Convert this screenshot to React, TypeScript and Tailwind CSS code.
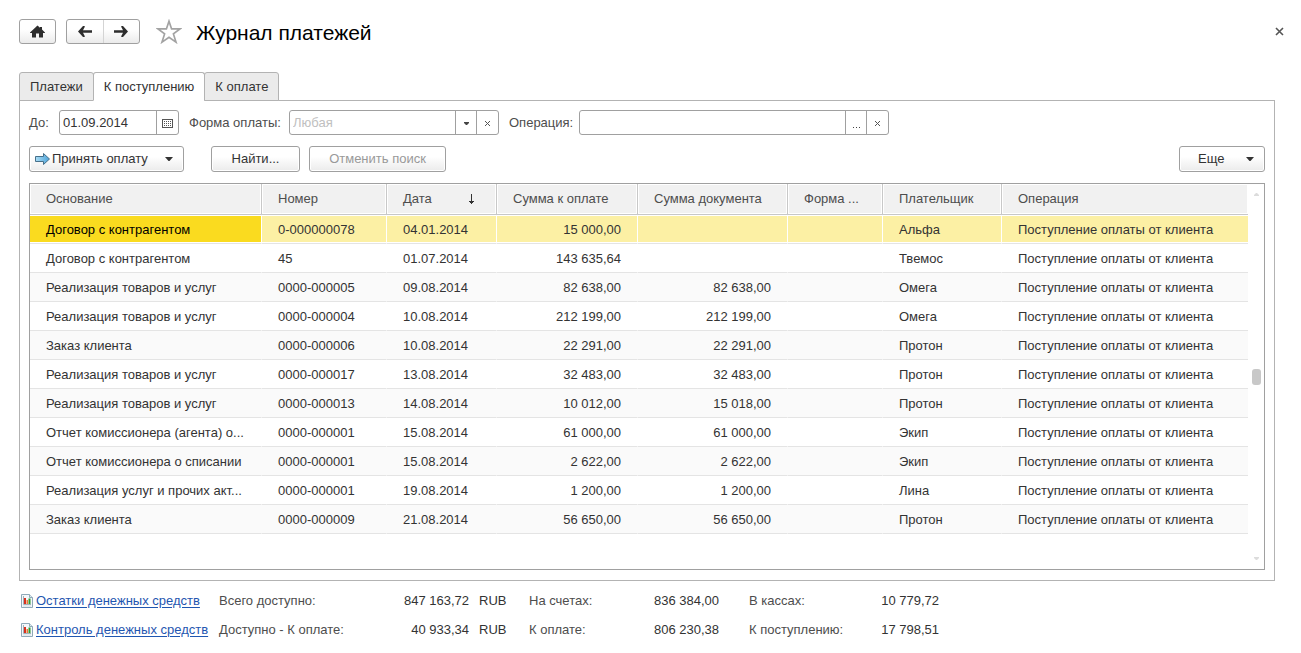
import type { ReactNode } from 'react';

type Row = {
  basis: string;
  number: string;
  date: string;
  toPay: string;
  docSum: string;
  payer: string;
};

const OPERATION = 'Поступление оплаты от клиента';

const rows: Row[] = [
  { basis: 'Договор с контрагентом', number: '0-000000078', date: '04.01.2014', toPay: '15 000,00', docSum: '', payer: 'Альфа' },
  { basis: 'Договор с контрагентом', number: '45', date: '01.07.2014', toPay: '143 635,64', docSum: '', payer: 'Твемос' },
  { basis: 'Реализация товаров и услуг', number: '0000-000005', date: '09.08.2014', toPay: '82 638,00', docSum: '82 638,00', payer: 'Омега' },
  { basis: 'Реализация товаров и услуг', number: '0000-000004', date: '10.08.2014', toPay: '212 199,00', docSum: '212 199,00', payer: 'Омега' },
  { basis: 'Заказ клиента', number: '0000-000006', date: '10.08.2014', toPay: '22 291,00', docSum: '22 291,00', payer: 'Протон' },
  { basis: 'Реализация товаров и услуг', number: '0000-000017', date: '13.08.2014', toPay: '32 483,00', docSum: '32 483,00', payer: 'Протон' },
  { basis: 'Реализация товаров и услуг', number: '0000-000013', date: '14.08.2014', toPay: '10 012,00', docSum: '15 018,00', payer: 'Протон' },
  { basis: 'Отчет комиссионера (агента) о...', number: '0000-000001', date: '15.08.2014', toPay: '61 000,00', docSum: '61 000,00', payer: 'Экип' },
  { basis: 'Отчет комиссионера о списании', number: '0000-000001', date: '15.08.2014', toPay: '2 622,00', docSum: '2 622,00', payer: 'Экип' },
  { basis: 'Реализация услуг и прочих акт...', number: '0000-000001', date: '19.08.2014', toPay: '1 200,00', docSum: '1 200,00', payer: 'Лина' },
  { basis: 'Заказ клиента', number: '0000-000009', date: '21.08.2014', toPay: '56 650,00', docSum: '56 650,00', payer: 'Протон' },
];

const totals = [
  {
    link: 'Остатки денежных средств',
    first: ['Всего доступно:', '847 163,72'],
    second: ['На счетах:', '836 384,00'],
    third: ['В кассах:', '10 779,72'],
  },
  {
    link: 'Контроль денежных средств',
    first: ['Доступно - К оплате:', '40 933,34'],
    second: ['К оплате:', '806 230,38'],
    third: ['К поступлению:', '17 798,51'],
  },
];

const buttonClass =
  'flex h-[26px] items-center rounded-[3px] border border-[#a0a0a0] bg-linear-to-b from-white from-40% to-[#ebebeb] shadow-[inset_0_0_0_1px_#fff]';

function Caret({ className }: { className?: string }) {
  return (
    <svg width="8" height="4" viewBox="0 0 8 4" className={className} aria-hidden="true">
      <path d="M0 0h8L4.500 4h-1z" fill="currentColor" />
    </svg>
  );
}

function SmallCross() {
  return (
    <svg width="5" height="5" viewBox="0 0 5 5" shapeRendering="crispEdges" aria-hidden="true">
      <path d="M0 0h1v1h-1zM4 0h1v1h-1zM1 1h1v1h-1zM3 1h1v1h-1zM2 2h1v1h-1zM1 3h1v1h-1zM3 3h1v1h-1zM0 4h1v1h-1zM4 4h1v1h-1z" fill="#555" />
    </svg>
  );
}

function ArrowIcon({ flip }: { flip?: boolean }) {
  return (
    <svg width="14" height="11" viewBox="0 0 14 11" className={flip ? 'rotate-180' : ''} aria-hidden="true">
      <path d="M0 5.500L5 0h1.700v1L5 4.200h9v2.600H5L6.700 10v1H5z" fill="#2e2e2e" />
    </svg>
  );
}

function CalendarIcon() {
  return (
    <svg width="11" height="9" viewBox="0 0 11 9" shapeRendering="crispEdges" aria-hidden="true">
      <rect x="0.5" y="0.5" width="10" height="8" fill="#fff" stroke="#555" />
      <path d="M2 2.500h7M2 4.500h7M2 6.500h7" stroke="#555" strokeDasharray="1 1" />
    </svg>
  );
}

function ReportIcon() {
  return (
    <svg width="12" height="14" viewBox="0 0 12 14" className="shrink-0" aria-hidden="true">
      <path d="M0.500 0.500h8l3 3v10h-11z" fill="#f4f8fb" stroke="#8fa9b8" />
      <path d="M8.500 0.500v3h3" fill="#dce8f0" stroke="#8fa9b8" />
      <path d="M2.500 2v8.500H10" fill="none" stroke="#a3b1ba" />
      <path d="M3 4h2v6H3z" fill="#d8301e" />
      <path d="M5.500 6h1.500v4H5.500z" fill="#e87a3a" />
      <path d="M7.500 4.500h2V10h-2z" fill="#2f9a30" />
      <path d="M2 12h8" stroke="#d3dde4" />
    </svg>
  );
}

function FieldButton({ label, children }: { label: string; children: ReactNode }) {
  return (
    <button type="button" aria-label={label} className="flex w-[21px] shrink-0 items-center justify-center border-l border-[#a0a0a0] pt-px last:w-[22px]">
      {children}
    </button>
  );
}

function HeadCell({ children }: { children: ReactNode }) {
  return (
    <th className="h-[31px] border-r border-b border-[#c8c8c8] bg-[#f1f1f1] px-4 text-left font-normal text-[#4d4d4d] shadow-[inset_0_0_0_1px_#fff] last:border-r-0">
      {children}
    </th>
  );
}

function TableRow({ row, index }: { row: Row; index: number }) {
  const selected = index === 0;
  const cell = selected
    ? 'h-[29px] border-b border-b-[#e4e4e4] border-r border-r-white px-4 pt-0.5 bg-[#fcf0a4] shadow-[inset_0_1px_0_#fff,inset_0_-1px_0_#fff] first:bg-[#fadb1f] first:text-black last:border-r-0'
    : 'h-[29px] border-b border-b-[#e4e4e4] border-r border-r-transparent px-4 pt-0.5 last:border-r-0';

  return (
    <tr className={index % 2 === 0 ? 'bg-[#fafafa]' : 'bg-white'}>
      <td className={cell}>{row.basis}</td>
      <td className={cell}>{row.number}</td>
      <td className={cell}>{row.date}</td>
      <td className={`${cell} text-right`}>{row.toPay}</td>
      <td className={`${cell} text-right`}>{row.docSum}</td>
      <td className={cell}></td>
      <td className={cell}>{row.payer}</td>
      <td className={cell}>{OPERATION}</td>
    </tr>
  );
}

export default function App() {
  return (
    <div className="bg-white pt-[19px] pb-2 pl-[19px] font-['Liberation_Sans',Arial,sans-serif] text-[13px] leading-4 text-[#333]">
      <header className="flex h-[25px] items-center pr-[17px]">
        <button type="button" aria-label="Домой" className="flex h-[25px] w-[37px] items-center justify-center rounded-[3px] border border-[#a0a0a0] bg-linear-to-b from-white from-40% to-[#ebebeb]">
          <svg width="15" height="13" viewBox="0 0 15 13" aria-hidden="true">
            <path d="M7.500 0.500l2.500 2.300V2h2v2.600l3 2.900V8h-2v4.500H9V8.500H6v4H2V8H0v-.5z" fill="#2e2e2e" />
          </svg>
        </button>
        <div className="ml-2.5 flex h-[25px] w-[74px] rounded-[3px] border border-[#a0a0a0] bg-linear-to-b from-white from-40% to-[#ebebeb]">
          <button type="button" aria-label="Назад" className="flex flex-1 items-center justify-center border-r border-[#d4d4d4]">
            <ArrowIcon />
          </button>
          <button type="button" aria-label="Вперед" className="flex flex-1 items-center justify-center">
            <ArrowIcon flip />
          </button>
        </div>
        <button type="button" aria-label="В избранное" className="ml-4">
          <svg width="26" height="25" viewBox="0 0 26 25" aria-hidden="true">
            <path d="M13 2.200l2.600 7.700h8.400l-6.600 5 2.600 8.200-7-4.900-7 4.900 2.600-8.200-6.600-5h8.400z" fill="#fff" stroke="#a3a3a3" strokeWidth="1.700" />
          </svg>
        </button>
        <h1 className="ml-3.5 pt-0.5 text-[21px] leading-6 text-black">Журнал платежей</h1>
        <button type="button" aria-label="Закрыть" className="ml-auto">
          <svg width="9" height="9" viewBox="0 0 9 9" aria-hidden="true">
            <path d="M1 1l7 7M8 1l-7 7" stroke="#555" strokeWidth="1.600" />
          </svg>
        </button>
      </header>

      <main className="mr-[26px]">
        <nav className="relative mt-7 -mb-px flex" role="tablist">
          <button type="button" role="tab" aria-selected="false" className="h-[29px] rounded-t-[3px] border border-[#b3b3b3] bg-[#ebebeb] px-2.5">
            Платежи
          </button>
          <button type="button" role="tab" aria-selected="true" className="-ml-px h-[29px] rounded-t-[3px] border border-[#b3b3b3] border-b-white bg-white px-2.5">
            К поступлению
          </button>
          <button type="button" role="tab" aria-selected="false" className="-ml-px h-[29px] rounded-t-[3px] border border-[#b3b3b3] bg-[#ebebeb] px-2.5">
            К оплате
          </button>
        </nav>

        <section className="border border-[#b3b3b3] px-[9px] pt-[9px] pb-2.5">
          <div className="flex items-center text-[#4d4d4d]">
            <label htmlFor="until" className="w-[30px]">До:</label>
            <div className="flex h-[25px] w-[120px] rounded-[3px] border border-[#a0a0a0]">
              <input id="until" defaultValue="01.09.2014" className="min-w-0 flex-1 px-[3px] text-[#333] outline-none" />
              <FieldButton label="Выбрать дату"><CalendarIcon /></FieldButton>
            </div>
            <label htmlFor="form" className="ml-2.5 w-[100px]">Форма оплаты:</label>
            <div className="flex h-[25px] w-[210px] rounded-[3px] border border-[#a0a0a0]">
              <input id="form" placeholder="Любая" className="min-w-0 flex-1 px-[3px] text-[#333] outline-none placeholder:text-[#c0c0c0]" />
              <FieldButton label="Открыть список">
                <svg width="5" height="3" viewBox="0 0 5 3" aria-hidden="true">
                  <path d="M0 0h5v1L3 3H2L0 1z" fill="#444" />
                </svg>
              </FieldButton>
              <FieldButton label="Очистить форму"><SmallCross /></FieldButton>
            </div>
            <label htmlFor="operation" className="ml-2.5 w-[70px]">Операция:</label>
            <div className="flex h-[25px] w-[310px] rounded-[3px] border border-[#a0a0a0]">
              <input id="operation" className="min-w-0 flex-1 px-[3px] text-[#333] outline-none" />
              <FieldButton label="Выбрать операцию">
                <svg width="7" height="9" viewBox="0 0 7 9" shapeRendering="crispEdges" aria-hidden="true">
                  <path d="M0 8h1v1h-1zM3 8h1v1h-1zM6 8h1v1h-1z" fill="#444" />
                </svg>
              </FieldButton>
              <FieldButton label="Очистить операцию"><SmallCross /></FieldButton>
            </div>
          </div>

          <div className="mt-[11px] flex">
            <button type="button" className={`${buttonClass} w-[155px] pl-[5px] pr-2.5`}>
              <svg width="15" height="12" viewBox="0 0 15 12" aria-hidden="true">
                <defs>
                  <linearGradient id="arrow" x1="0" x2="1">
                    <stop offset="0" stopColor="#a9dcf5" />
                    <stop offset="1" stopColor="#4da3d8" />
                  </linearGradient>
                </defs>
                <path d="M0.500 3.500h8v-3l6 5.500-6 5.500v-3h-8z" fill="url(#arrow)" stroke="#47708a" />
              </svg>
              <span className="ml-0.5">Принять оплату</span>
              <Caret className="ml-auto" />
            </button>
            <button type="button" className={`${buttonClass} ml-[27px] w-[89px] justify-center`}>Найти...</button>
            <button type="button" disabled className={`${buttonClass} ml-[9px] w-[137px] justify-center text-[#999]`}>Отменить поиск</button>
            <button type="button" className={`${buttonClass} ml-auto w-[86px] pr-2.5 pl-[18px]`}>
              <span>Еще</span>
              <Caret className="ml-auto" />
            </button>
          </div>

          <div className="mt-[11px] flex border border-[#a0a0a0]">
            <div className="min-w-0 flex-1 pb-[35px]">
              <table className="w-full table-fixed border-separate border-spacing-0 whitespace-nowrap">
                <colgroup>
                  <col className="w-[232px]" />
                  <col className="w-[125px]" />
                  <col className="w-[110px]" />
                  <col className="w-[141px]" />
                  <col className="w-[150px]" />
                  <col className="w-[95px]" />
                  <col className="w-[119px]" />
                  <col />
                </colgroup>
                <thead>
                  <tr>
                    <HeadCell>Основание</HeadCell>
                    <HeadCell>Номер</HeadCell>
                    <HeadCell>
                      <div className="flex items-center justify-between pr-1.5">
                        Дата
                        <svg width="5" height="10" viewBox="0 0 5 10" shapeRendering="crispEdges" aria-hidden="true">
                          <path d="M2 0h1v10h-1zM0 7h5v1h-5zM1 8h3v1h-3z" fill="#333" />
                        </svg>
                      </div>
                    </HeadCell>
                    <HeadCell>Сумма к оплате</HeadCell>
                    <HeadCell>Сумма документа</HeadCell>
                    <HeadCell>Форма ...</HeadCell>
                    <HeadCell>Плательщик</HeadCell>
                    <HeadCell>Операция</HeadCell>
                  </tr>
                </thead>
                <tbody>
                  {rows.map((row, index) => (
                    <TableRow key={index} row={row} index={index} />
                  ))}
                </tbody>
              </table>
            </div>
            <div className="flex w-4 flex-col items-center justify-between py-[9px] text-[#dcdcdc]">
              <svg width="5" height="3" viewBox="0 0 5 3" aria-hidden="true">
                <path d="M2 0h1l2 2v1H0V2z" fill="currentColor" />
              </svg>
              <div className="h-4 w-[9px] rounded-[3px] bg-[#c8c8c8]" />
              <svg width="5" height="3" viewBox="0 0 5 3" aria-hidden="true">
                <path d="M0 0h5v1L3 3H2L0 1z" fill="currentColor" />
              </svg>
            </div>
          </div>
        </section>

        <footer className="mt-[5px] whitespace-nowrap">
          {totals.map((item) => (
            <div key={item.link} className="grid h-[29px] grid-cols-[200px_150px_100px_60px_100px_90px_30px_100px_90px] items-center">
              <a href="#" className="flex items-center gap-[3px] pl-0.5 text-[#1f56b0]">
                <ReportIcon />
                <span className="underline underline-offset-2">{item.link}</span>
              </a>
              <span className="text-[#4d4d4d]">{item.first[0]}</span>
              <span className="text-right">{item.first[1]}</span>
              <span className="pl-2.5">RUB</span>
              <span className="text-[#4d4d4d]">{item.second[0]}</span>
              <span className="text-right">{item.second[1]}</span>
              <span className="col-start-8 text-[#4d4d4d]">{item.third[0]}</span>
              <span className="text-right">{item.third[1]}</span>
            </div>
          ))}
        </footer>
      </main>
    </div>
  );
}
